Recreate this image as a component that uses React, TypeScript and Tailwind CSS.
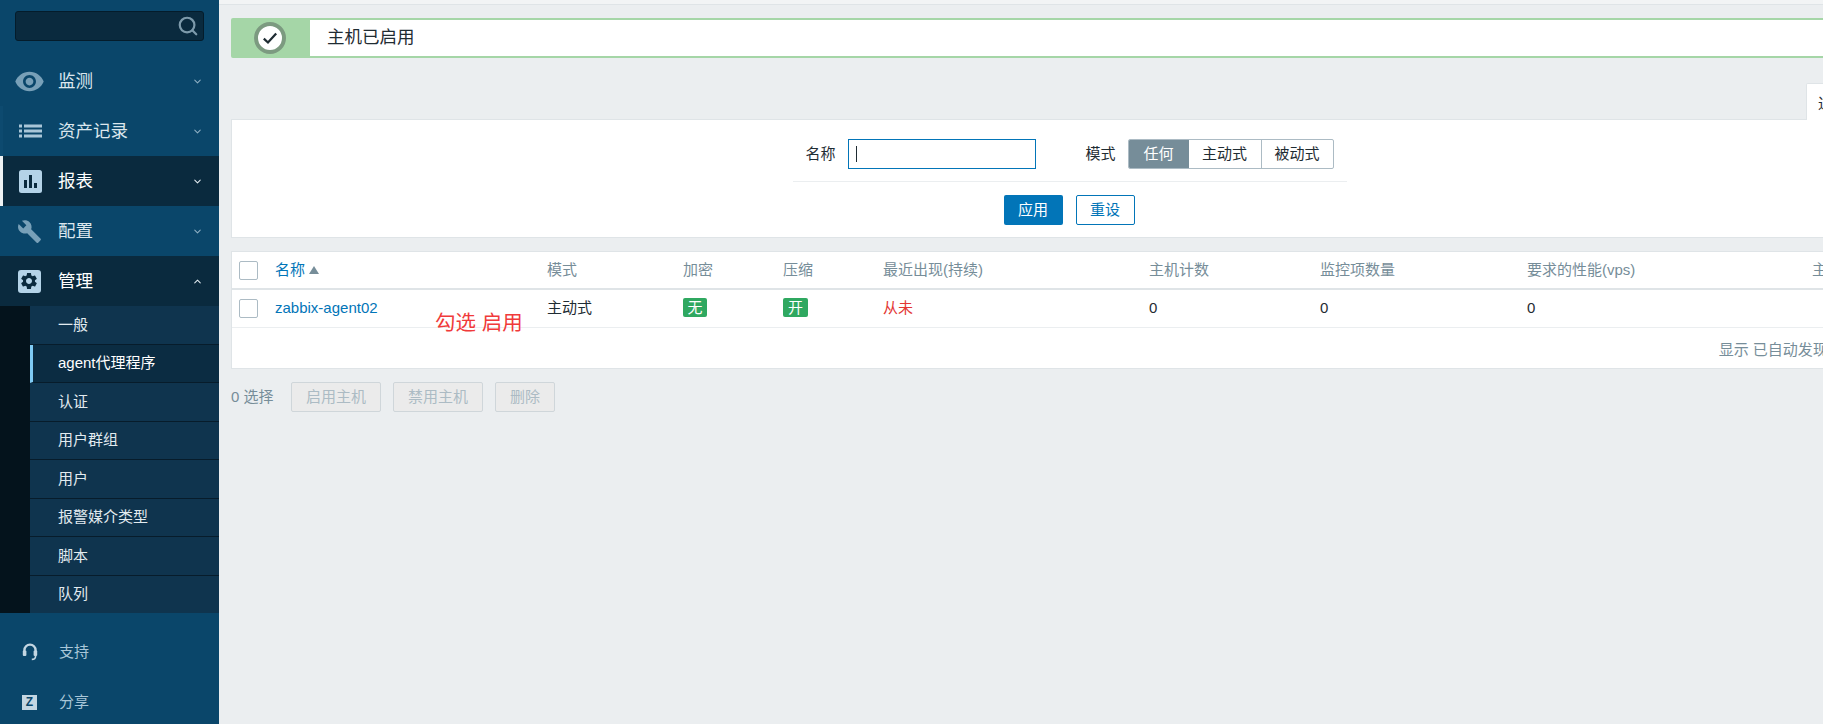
import { ChevronDown, ChevronUp, Search } from 'lucide-react';

const FONT = "font-['Liberation_Sans','Noto_Sans_CJK_SC',sans-serif]";

const NAV = [
  { label: '监测', icon: 'eye', tone: 'plain' },
  { label: '资产记录', icon: 'list', tone: 'strip' },
  { label: '报表', icon: 'poll', tone: 'selected' },
  { label: '配置', icon: 'wrench', tone: 'plain' },
  { label: '管理', icon: 'gear', tone: 'open' },
];

const SUB_ITEMS = ['一般', 'agent代理程序', '认证', '用户群组', '用户', '报警媒介类型', '脚本', '队列'];

const COLUMNS = ['模式', '加密', '压缩', '最近出现(持续)', '主机计数', '监控项数量', '要求的性能(vps)', '主机'];

function NavIcon({ name }: { name: string }) {
  if (name === 'eye') {
    return (
      <svg viewBox="0 0 24 24" className="h-[31px] w-[31px] text-[#78a0b8]" fill="currentColor">
        <path d="M12 4.5C7 4.5 2.73 7.61 1 12c1.73 4.39 6 7.5 11 7.5s9.27-3.11 11-7.5c-1.73-4.39-6-7.5-11-7.5zM12 17c-2.76 0-5-2.24-5-5s2.24-5 5-5 5 2.24 5 5-2.24 5-5 5zm0-8c-1.66 0-3 1.34-3 3s1.34 3 3 3 3-1.34 3-3-1.34-3-3-3z" />
      </svg>
    );
  }
  if (name === 'list') {
    return (
      <svg viewBox="0 0 23 14" className="h-[14px] w-[23px] text-[#a9c6d8]" fill="currentColor">
        <rect x="0" y="0.5" width="3" height="3" />
        <rect x="0" y="5.5" width="3" height="3" />
        <rect x="0" y="10.5" width="3" height="3" />
        <rect x="5" y="0.5" width="18" height="3" />
        <rect x="5" y="5.5" width="18" height="3" />
        <rect x="5" y="10.5" width="18" height="3" />
      </svg>
    );
  }
  if (name === 'poll') {
    return (
      <svg viewBox="0 0 23 23" className="h-[23px] w-[23px]">
        <rect width="23" height="23" rx="2.5" fill="#b4d3e8" />
        <rect x="5" y="10" width="3" height="8" fill="#0a2a3e" />
        <rect x="10" y="5" width="3" height="13" fill="#0a2a3e" />
        <rect x="15" y="13" width="3" height="5" fill="#0a2a3e" />
      </svg>
    );
  }
  if (name === 'wrench') {
    return (
      <svg viewBox="0 0 24 24" className="h-[25px] w-[25px] text-[#78a0b8]" fill="currentColor">
        <path d="M22.7 19l-9.1-9.1c.9-2.3.4-5-1.5-6.9-2-2-5-2.4-7.4-1.3L9 6 6 9 1.6 4.7C.4 7.1.9 10.1 2.9 12.1c1.9 1.9 4.6 2.4 6.9 1.5l9.1 9.1c.4.4 1 .4 1.4 0l2.3-2.3c.5-.4.5-1.1.1-1.4z" />
      </svg>
    );
  }
  return (
    <div className="flex h-[23px] w-[23px] items-center justify-center rounded-[3px] bg-[#b4d3e8]">
      <svg viewBox="0 0 24 24" className="h-[20px] w-[20px] text-[#0a2a3e]" fill="currentColor">
        <path d="M19.14 12.94c.04-.3.06-.61.06-.94 0-.32-.02-.64-.07-.94l2.03-1.58c.18-.14.23-.41.12-.61l-1.92-3.32c-.12-.22-.37-.29-.59-.22l-2.39.96c-.5-.38-1.03-.7-1.62-.94l-.36-2.54c-.04-.24-.24-.41-.48-.41h-3.84c-.24 0-.43.17-.47.41l-.36 2.54c-.59.24-1.13.57-1.62.94l-2.39-.96c-.22-.08-.47 0-.59.22L2.74 8.87c-.12.21-.08.47.12.61l2.03 1.58c-.05.3-.09.63-.09.94s.02.64.07.94l-2.03 1.58c-.18.14-.23.41-.12.61l1.92 3.32c.12.22.37.29.59.22l2.39-.96c.5.38 1.03.7 1.62.94l.36 2.54c.05.24.24.41.48.41h3.84c.24 0 .44-.17.47-.41l.36-2.54c.59-.24 1.13-.56 1.62-.94l2.39.96c.22.08.47 0 .59-.22l1.92-3.32c.12-.22.07-.47-.12-.61l-2.01-1.58zM12 15.6c-1.98 0-3.6-1.62-3.6-3.6s1.62-3.6 3.6-3.6 3.6 1.62 3.6 3.6-1.62 3.6-3.6 3.6z" />
      </svg>
    </div>
  );
}

function Sidebar() {
  return (
    <aside className="flex h-full w-[219px] shrink-0 flex-col bg-[#0a466a]">
      <div className="h-[56px] shrink-0 px-[15px] pt-[11px]">
        <div className="flex h-[30px] items-center justify-end rounded-[3px] border border-[#041c2b] bg-[#0a2a3e] pr-[4px]">
          <Search size={22} strokeWidth={2.4} className="text-[#7d9aab]" />
        </div>
      </div>
      {NAV.map((item) => {
        const dark = item.tone === 'selected' || item.tone === 'open';
        const Chevron = item.tone === 'open' ? ChevronUp : ChevronDown;
        return (
          <div
            key={item.label}
            className={`flex h-[50px] shrink-0 items-center ${dark ? 'bg-[#0a2a3e] text-white' : 'text-[#dce7ee]'} ${
              item.tone === 'selected' ? 'border-l-[3px] border-[#eef2f4]' : ''
            } ${item.tone === 'strip' ? 'border-l-[3px] border-[#0d4a6f]' : ''}`}
          >
            <div
              className={`flex items-center justify-center ${
                item.tone === 'selected' || item.tone === 'strip' ? 'w-[55px]' : 'w-[58px]'
              }`}
            >
              <NavIcon name={item.icon} />
            </div>
            <span className="flex-1 text-[17.5px]">{item.label}</span>
            <Chevron size={11} strokeWidth={2.2} className={`mr-[16px] ${dark ? 'text-[#e4edf2]' : 'text-[#8fb0c4]'}`} />
          </div>
        );
      })}
      <div className="h-[307px] shrink-0 bg-[#04131c] pl-[30px]">
        <div className="flex h-full flex-col">
          {SUB_ITEMS.map((label, i) => (
            <div
              key={label}
              className={`flex flex-1 items-center text-[15px] ${
                i < SUB_ITEMS.length - 1 ? 'border-b border-[#071c2b]' : ''
              } ${
                i === 1
                  ? 'border-l-[3px] border-l-[#7fcbf5] bg-[#0b2c42] pl-[25px] text-white'
                  : 'bg-[#0f344e] pl-[28px] text-[#e2ebf0]'
              }`}
            >
              {label}
            </div>
          ))}
        </div>
      </div>
      <div className="flex flex-1 flex-col pt-[14px] text-[15px] text-[#a9c6d8]">
        <div className="flex h-[50px] items-center">
          <div className="flex w-[59px] justify-center">
            <svg viewBox="0 0 16 18" className="h-[18px] w-[16px]" fill="none" stroke="#c3d6e2" strokeWidth="2.4">
              <path d="M2.4 10V7.2a5.6 5.6 0 0 1 11.2 0V10" />
              <rect x="0.8" y="7.5" width="3.6" height="5.5" rx="1" fill="#c3d6e2" stroke="none" />
              <rect x="11.6" y="7.5" width="3.6" height="5.5" rx="1" fill="#c3d6e2" stroke="none" />
              <path d="M13.6 13c0 2-1.5 3.4-3.8 3.4" strokeWidth="1.6" />
            </svg>
          </div>
          <span>支持</span>
        </div>
        <div className="flex h-[50px] items-center">
          <div className="flex w-[59px] justify-center">
            <div className="flex h-[15px] w-[15px] items-center justify-center bg-[#c3d6e2] text-[12px] leading-none font-bold text-[#0a466a]">
              Z
            </div>
          </div>
          <span>分享</span>
        </div>
      </div>
    </aside>
  );
}

function MessageBar() {
  return (
    <div className="flex h-[40px] overflow-hidden rounded-[2px] border-2 border-[#a5d6a7] bg-white">
      <div className="flex w-[77px] items-center justify-center bg-[#a5d6a7] pr-[3px]">
        <div className="flex h-[32px] w-[32px] shrink-0 items-center justify-center rounded-full border-[4px] border-[#7c9a80] bg-white">
          <svg viewBox="0 0 16 16" className="h-[18px] w-[18px]" fill="none" stroke="#1f2c33" strokeWidth="2">
            <path d="M2.5 8.5 6.2 12 13.5 4" />
          </svg>
        </div>
      </div>
      <div className="flex items-center pb-[2px] pl-[17px] text-[17.5px] text-[#1f2c33]">主机已启用</div>
    </div>
  );
}

function FilterPanel() {
  return (
    <>
      <div className="mt-[25px] flex h-[36px] justify-end pr-[35px]">
        <div className="-mb-px w-[67px] rounded-t-[2px] border border-b-0 border-[#dfe4e7] bg-white pt-[9px] pl-[11px] text-[15px] text-[#1f2c33]">
          过滤器
        </div>
      </div>
      <div className="h-[119px] border border-[#dfe4e7] bg-white">
        <div className="mx-auto w-[554px]">
          <div className="flex h-[62px] items-start border-b border-[#ebeef0] pt-[19px] text-[15px] text-[#1f2c33]">
            <span className="ml-[13px] w-[42px] leading-[30px]">名称</span>
            <div className="flex h-[30px] w-[188px] items-center border border-[#0275b8] pl-[7px]">
              <span className="h-[16px] w-px bg-[#1f2c33]" />
            </div>
            <span className="ml-[50px] w-[42px] leading-[30px]">模式</span>
            <div className="flex h-[30px] overflow-hidden rounded-[2px] border border-[#acbbc4] leading-[28px]">
              <span className="w-[60px] bg-[#768d99] text-center text-white">任何</span>
              <span className="w-[73px] border-r border-[#acbbc4] text-center">主动式</span>
              <span className="w-[71px] text-center">被动式</span>
            </div>
          </div>
        </div>
        <div className="mt-[13px] flex justify-center gap-[13px] pr-[1px] text-[15px]">
          <button className="h-[30px] w-[59px] rounded-[2px] bg-[#0275b8] text-white">应用</button>
          <button className="h-[30px] w-[59px] rounded-[2px] border border-[#0275b8] text-[#0275b8]">重设</button>
        </div>
      </div>
    </>
  );
}

function HostTable() {
  return (
    <div className="mt-[13px] h-[118px] border border-[#dfe4e7] bg-white text-[15px]">
      <table className="w-full table-fixed border-collapse">
        <colgroup>
          <col className="w-[43px]" />
          <col className="w-[272px]" />
          <col className="w-[136px]" />
          <col className="w-[100px]" />
          <col className="w-[100px]" />
          <col className="w-[266px]" />
          <col className="w-[171px]" />
          <col className="w-[207px]" />
          <col className="w-[285px]" />
          <col />
        </colgroup>
        <thead>
          <tr className="h-[37px] border-b-2 border-[#dfe4e7] text-left">
            <th className="pl-[7px]">
              <div className="h-[19px] w-[19px] rounded-[2px] border border-[#acbbc4]" />
            </th>
            <th className="font-normal text-[#0275b8]">
              <span className="inline-flex items-center gap-[4px]">
                名称
                <svg viewBox="0 0 10 8" className="h-[8px] w-[10px]">
                  <path d="M5 0 10 8H0z" fill="#768d99" />
                </svg>
              </span>
            </th>
            {COLUMNS.map((col) => (
              <th key={col} className="overflow-hidden font-normal whitespace-nowrap text-[#768d99]">
                {col}
              </th>
            ))}
          </tr>
        </thead>
        <tbody>
          <tr className="h-[38px] border-b border-[#ebeef0] text-[#1f2c33]">
            <td className="pl-[7px]">
              <div className="h-[19px] w-[19px] rounded-[2px] border border-[#acbbc4]" />
            </td>
            <td className="text-[#0275b8]">zabbix-agent02</td>
            <td>主动式</td>
            <td>
              <span className="inline-block h-[19px] w-[24px] rounded-[2px] bg-[#2fa860] text-center leading-[19px] text-white">无</span>
            </td>
            <td>
              <span className="inline-block h-[19px] w-[25px] rounded-[2px] bg-[#2fa860] text-center leading-[19px] text-white">开</span>
            </td>
            <td className="text-[#e33734]">从未</td>
            <td>0</td>
            <td>0</td>
            <td>0</td>
            <td />
          </tr>
        </tbody>
      </table>
      <div className="pt-[11px] pr-[5px] text-right whitespace-nowrap text-[#768d99]">显示 已自动发现的 1 中的 1</div>
    </div>
  );
}

function BulkActions() {
  return (
    <div className="mt-[13px] flex h-[30px] items-center text-[15px] text-[#768d99]">
      <span className="w-[60px]">0 选择</span>
      {[
        { label: '启用主机', width: 'w-[90px]' },
        { label: '禁用主机', width: 'w-[90px]' },
        { label: '删除', width: 'w-[60px]' },
      ].map((b) => (
        <button
          key={b.label}
          className={`mr-[12px] h-[30px] rounded-[2px] border border-[#cfd6da] bg-[#ebebeb] text-[#acbbc4] ${b.width}`}
        >
          {b.label}
        </button>
      ))}
    </div>
  );
}

export default function App() {
  return (
    <div className={`relative flex h-[724px] w-[1823px] overflow-hidden bg-[#ebeef0] ${FONT}`}>
      <Sidebar />
      <main className="min-w-0 flex-1">
        <div className="h-[5px] border-b border-[#dfe4e7] bg-[#f2f4f5]" />
        <div className="box-content w-[1677px] pt-[13px] pl-[12px]">
          <MessageBar />
          <FilterPanel />
          <HostTable />
          <BulkActions />
        </div>
      </main>
      {/* red note that was drawn over the screenshot */}
      <span className="absolute top-[308px] left-[435px] text-[20.5px] text-[#f03a3a]">勾选 启用</span>
    </div>
  );
}
